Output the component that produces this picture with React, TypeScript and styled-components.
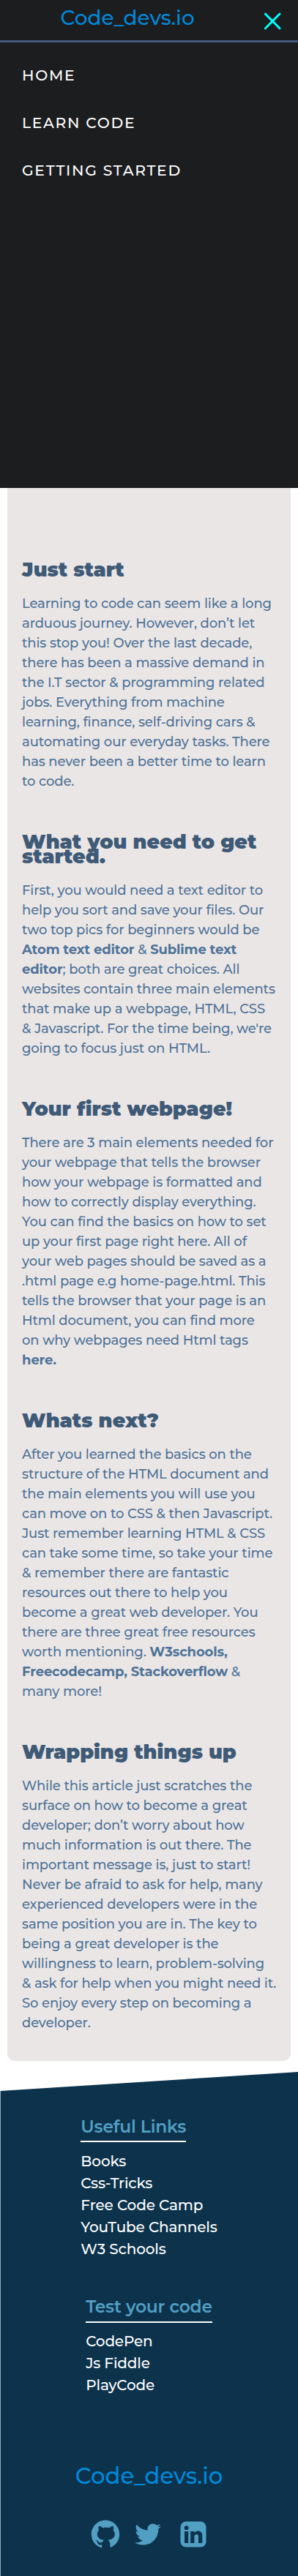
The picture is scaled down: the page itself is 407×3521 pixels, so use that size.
import React from 'react';
import styled, { createGlobalStyle } from 'styled-components';
import { AiOutlineTwitter } from 'react-icons/ai';

const GlobalStyle = createGlobalStyle`
  *, *::before, *::after { box-sizing: border-box; }
  body {
    margin: 0;
    background: #fff;
    font-family: Montserrat, Inter, sans-serif;
  }
  ul, p, h2, h3 { margin: 0; padding: 0; }
  ul { list-style: none; }
  a { color: inherit; text-decoration: none; }
`;

const Page = styled.div`
  display: flex;
  flex-direction: column;
  width: 407px;
`;

const Header = styled.header`
  display: flex;
  justify-content: space-between;
  align-items: flex-start;
  height: 58px;
  padding: 10px 23.5px 0 82.5px;
  background: #1c1d1f;
  border-bottom: 3px solid #445a7e;
`;

const Logo = styled.a<{ $large?: boolean }>`
  display: block;
  color: #0088da;
  font-weight: 500;
  font-size: ${(p) => (p.$large ? 30.7 : 27.9)}px;
  line-height: ${(p) => (p.$large ? 32 : 28)}px;
  white-space: nowrap;
`;

const CloseButton = styled.button`
  display: flex;
  margin: 7px 0 0;
  padding: 0;
  border: 0;
  background: none;
`;

const Menu = styled.nav`
  height: 609px;
  padding: 12px 30px 0;
  background: #1c1d1f;
`;

const MenuItem = styled.li`
  color: #fff;
  font-size: 20.3px;
  font-weight: 500;
  letter-spacing: 1.7px;
  line-height: 65px;
`;

const Article = styled.main`
  display: flex;
  flex-direction: column;
  gap: 59.2px;
  height: 2150px;
  margin: 0 10px;
  padding: 102px 20px 0;
  background: #eae6e5;
  border-radius: 0 0 10px 10px;
`;

const Section = styled.section`
  display: flex;
  flex-direction: column;
  gap: 22.6px;
`;

const SectionTitle = styled.h2`
  color: #3f5a77;
  font-size: 27px;
  font-weight: 900;
  letter-spacing: -0.03px;
  line-height: 20.25px;
`;

const Paragraph = styled.p`
  color: #4f7398;
  font-size: 18px;
  font-weight: 500;
  letter-spacing: -0.13px;
  line-height: 27px;
  b { font-weight: 700; }
`;

const Line = styled.span`
  display: block;
  white-space: nowrap;
`;

const Footer = styled.footer`
  display: flex;
  flex-direction: column;
  align-items: center;
  height: 689px;
  margin-top: 15px;
  padding-top: 60.5px;
  background: #0d334c;
  clip-path: polygon(0.6px 26px, 100% 0, 100% 100%, 0.6px 100%);
`;

const LinkGroup = styled.div`
  margin-bottom: 50.5px;
`;

const GroupTitle = styled.h3`
  width: max-content;
  padding-bottom: 5.5px;
  border-bottom: 2px solid #fff;
  color: #529fc4;
  font-size: 23.4px;
  font-weight: 600;
  letter-spacing: -0.19px;
  line-height: 28px;
`;

const LinkList = styled.ul`
  margin-top: 10.6px;
  color: #fff;
  font-size: 20px;
  font-weight: 500;
  letter-spacing: -0.15px;
  line-height: 30px;
`;

const FooterLogo = styled.div`
  margin-top: 42.6px;
`;

const Socials = styled.div`
  display: flex;
  gap: 12px;
  margin-top: 40px;
  color: #529fc4;
`;

const SocialLink = styled.a`
  display: flex;
  align-items: center;
  justify-content: center;
  width: 48px;
  height: 48px;
`;

const TwitterIcon = styled(AiOutlineTwitter)`
  width: 44px;
  height: 44px;
  margin-right: 3px;
`;

const GithubIcon = () => (
  <svg width="48" height="48" viewBox="0 0 30 30" fill="currentColor">
    <path d="M15,3C8.373,3,3,8.373,3,15c0,5.623,3.872,10.328,9.092,11.63C12.036,26.468,12,26.28,12,26.047v-2.051c-0.487,0-1.303,0-1.508,0c-0.821,0-1.551-0.353-1.905-1.009c-0.393-0.729-0.461-1.844-1.435-2.526c-0.289-0.227-0.069-0.486,0.264-0.451c0.615,0.174,1.125,0.596,1.605,1.222c0.478,0.627,0.703,0.769,1.596,0.769c0.433,0,1.081-0.025,1.691-0.121c0.328-0.833,0.895-1.6,1.588-1.962c-3.996-0.411-5.903-2.399-5.903-5.098c0-1.162,0.495-2.286,1.336-3.233C9.053,10.647,8.706,8.73,9.435,8c1.798,0,2.885,1.166,3.146,1.481C13.477,9.174,14.461,9,15.495,9c1.036,0,2.024,0.174,2.922,0.483C18.675,9.17,19.763,8,21.565,8c0.732,0.731,0.381,2.656,0.102,3.594c0.836,0.945,1.328,2.066,1.328,3.226c0,2.697-1.904,4.684-5.894,5.097C18.199,20.49,19,22.1,19,23.313v2.734c0,0.104-0.023,0.179-0.035,0.268C23.641,24.676,27,20.236,27,15C27,8.373,21.627,3,15,3z" />
  </svg>
);

const LinkedinIcon = () => (
  <svg width="48" height="48" viewBox="0 0 48 48" fill="none">
    <rect x="6.5" y="6.5" width="35" height="35" rx="7.5" fill="currentColor" />
    <circle cx="14.6" cy="15.2" r="2.9" fill="#0d334c" />
    <path
      d="M12 20h5.2v16H12zM20.2 20h5.2v2.3c1-1.7 2.6-2.7 4.9-2.7 4 0 6 2.5 6 6.9V36H31v-8.7c0-2-.9-3.2-2.6-3.2-1.9 0-3 1.3-3 3.4V36h-5.2z"
      fill="#0d334c"
    />
  </svg>
);

type Lines = React.ReactNode[];

const sections: { title: Lines; body: Lines }[] = [
  {
    title: ['Just start'],
    body: [
      'Learning to code can seem like a long',
      'arduous journey. However, don’t let',
      'this stop you! Over the last decade,',
      'there has been a massive demand in',
      'the I.T sector & programming related',
      'jobs. Everything from machine',
      'learning, finance, self-driving cars &',
      'automating our everyday tasks. There',
      'has never been a better time to learn',
      'to code.',
    ],
  },
  {
    title: ['What you need to get', 'started.'],
    body: [
      'First, you would need a text editor to',
      'help you sort and save your files. Our',
      'two top pics for beginners would be',
      <><b>Atom text editor</b> &amp; <b>Sublime text</b></>,
      <><b>editor</b>; both are great choices. All</>,
      'websites contain three main elements',
      'that make up a webpage, HTML, CSS',
      "& Javascript. For the time being, we're",
      'going to focus just on HTML.',
    ],
  },
  {
    title: ['Your first webpage!'],
    body: [
      'There are 3 main elements needed for',
      'your webpage that tells the browser',
      'how your webpage is formatted and',
      'how to correctly display everything.',
      'You can find the basics on how to set',
      'up your first page right here. All of',
      'your web pages should be saved as a',
      '.html page e.g home-page.html. This',
      'tells the browser that your page is an',
      'Html document, you can find more',
      'on why webpages need Html tags',
      <b>here.</b>,
    ],
  },
  {
    title: ['Whats next?'],
    body: [
      'After you learned the basics on the',
      'structure of the HTML document and',
      'the main elements you will use you',
      'can move on to CSS & then Javascript.',
      'Just remember learning HTML & CSS',
      'can take some time, so take your time',
      '& remember there are fantastic',
      'resources out there to help you',
      'become a great web developer. You',
      'there are three great free resources',
      <>worth mentioning. <b>W3schools,</b></>,
      <><b>Freecodecamp, Stackoverflow</b> &amp;</>,
      'many more!',
    ],
  },
  {
    title: ['Wrapping things up'],
    body: [
      'While this article just scratches the',
      'surface on how to become a great',
      'developer; don’t worry about how',
      'much information is out there. The',
      'important message is, just to start!',
      'Never be afraid to ask for help, many',
      'experienced developers were in the',
      'same position you are in. The key to',
      'being a great developer is the',
      'willingness to learn, problem-solving',
      '& ask for help when you might need it.',
      'So enjoy every step on becoming a',
      'developer.',
    ],
  },
];

const menuItems = ['HOME', 'LEARN CODE', 'GETTING STARTED'];

const linkGroups = [
  {
    title: 'Useful Links',
    links: ['Books', 'Css-Tricks', 'Free Code Camp', 'YouTube Channels', 'W3 Schools'],
  },
  {
    title: 'Test your code',
    links: ['CodePen', 'Js Fiddle', 'PlayCode'],
  },
];

const renderLines = (lines: Lines) => lines.map((text, i) => <Line key={i}>{text}</Line>);

export default function App() {
  return (
    <>
      <GlobalStyle />
      <Page>
        <Header>
          <Logo href="#">Code_devs.io</Logo>
          <CloseButton aria-label="Close menu">
            <svg width="24" height="24" viewBox="0 0 24 24" stroke="#00ffff" strokeWidth="3" strokeLinecap="round">
              <path d="M2.4 2 22 21.8M22 2 2.4 21.8" />
            </svg>
          </CloseButton>
        </Header>
        <Menu>
          <ul>
            {menuItems.map((label) => (
              <MenuItem key={label}><a href="#">{label}</a></MenuItem>
            ))}
          </ul>
        </Menu>
        <Article>
          {sections.map((s, i) => (
            <Section key={i}>
              <SectionTitle>{renderLines(s.title)}</SectionTitle>
              <Paragraph>{renderLines(s.body)}</Paragraph>
            </Section>
          ))}
        </Article>
        <Footer>
          {linkGroups.map((g) => (
            <LinkGroup key={g.title}>
              <GroupTitle>{g.title}</GroupTitle>
              <LinkList>
                {g.links.map((label) => (
                  <li key={label}><a href="#">{label}</a></li>
                ))}
              </LinkList>
            </LinkGroup>
          ))}
          <FooterLogo>
            <Logo $large href="#">Code_devs.io</Logo>
          </FooterLogo>
          <Socials>
            <SocialLink href="#" aria-label="GitHub"><GithubIcon /></SocialLink>
            <SocialLink href="#" aria-label="Twitter"><TwitterIcon /></SocialLink>
            <SocialLink href="#" aria-label="LinkedIn"><LinkedinIcon /></SocialLink>
          </Socials>
        </Footer>
      </Page>
    </>
  );
}
